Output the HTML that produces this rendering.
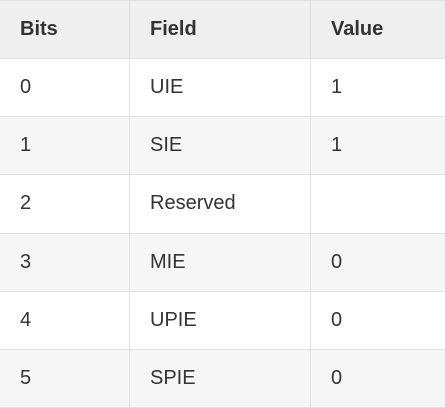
<!DOCTYPE html><html><head><style>
body{margin:0;background:#fff;}
table{border-collapse:collapse;width:445px;font-family:"Liberation Sans",Arial,sans-serif;font-size:20px;color:#333;}
td,th{height:57.15px;padding:0 0 0 20px;text-align:left;border-top:1px solid #e1e1e1;border-bottom:1px solid #e1e1e1;border-left:1px solid #e1e1e1;}
td:first-child,th:first-child{border-left:none;}
th{background:#efefef;font-weight:bold;}
tr:nth-child(even) td{background:#f6f6f6;}
tr:nth-child(odd) td{background:#fff;}
</style></head><body>
<table>
<thead><tr><th style="width:109px">Bits</th><th style="width:160px">Field</th><th>Value</th></tr></thead>
<tbody>
<tr><td>0</td><td>UIE</td><td>1</td></tr>
<tr><td>1</td><td>SIE</td><td>1</td></tr>
<tr><td>2</td><td>Reserved</td><td></td></tr>
<tr><td>3</td><td>MIE</td><td>0</td></tr>
<tr><td>4</td><td>UPIE</td><td>0</td></tr>
<tr><td>5</td><td>SPIE</td><td>0</td></tr>
</tbody></table>
</body></html>
